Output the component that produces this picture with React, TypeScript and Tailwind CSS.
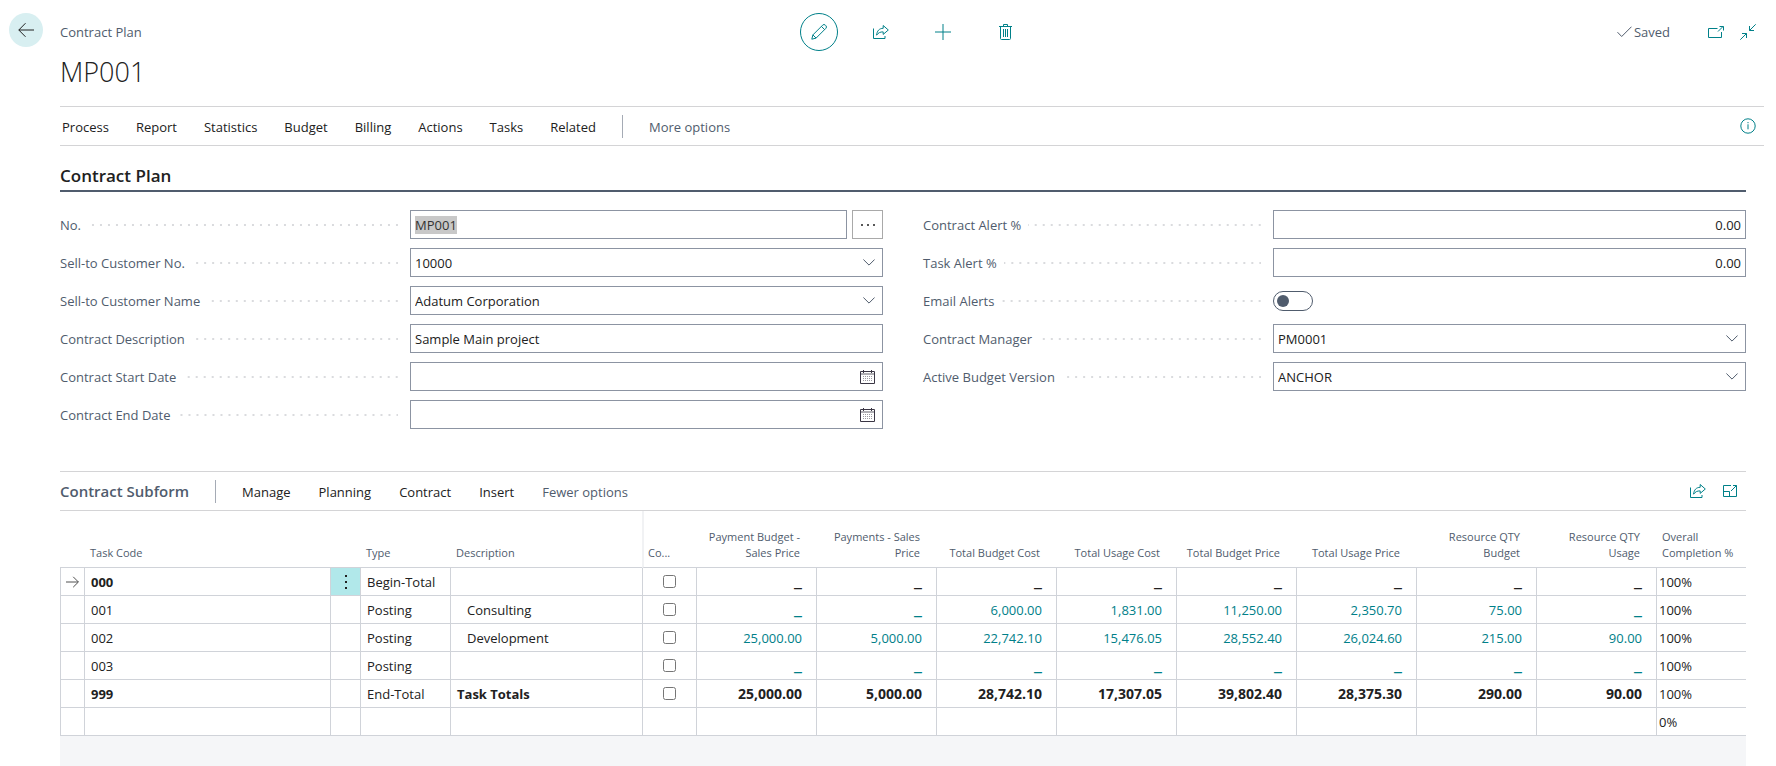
import React, { useEffect, useRef } from "react";

type IconProps = {
    className?: string;
};

type TaskRow = {
    code: string;
    type: string;
    description: string;
    amounts: string[];
    completion: string;
    total?: boolean;
    current?: boolean;
    linked?: boolean;
};

const pageActions = [
    "Process",
    "Report",
    "Statistics",
    "Budget",
    "Billing",
    "Actions",
    "Tasks",
    "Related",
];

const subformActions = ["Manage", "Planning", "Contract", "Insert"];

const amountColumns = [
    "Payment Budget - Sales Price",
    "Payments - Sales Price",
    "Total Budget Cost",
    "Total Usage Cost",
    "Total Budget Price",
    "Total Usage Price",
    "Resource QTY Budget",
    "Resource QTY Usage",
];

const rows: TaskRow[] = [
    {
        code: "000",
        type: "Begin-Total",
        description: "",
        amounts: ["_", "_", "_", "_", "_", "_", "_", "_"],
        completion: "100%",
        total: true,
        current: true,
    },
    {
        code: "001",
        type: "Posting",
        description: "Consulting",
        amounts: ["_", "_", "6,000.00", "1,831.00", "11,250.00", "2,350.70", "75.00", "_"],
        completion: "100%",
        linked: true,
    },
    {
        code: "002",
        type: "Posting",
        description: "Development",
        amounts: [
            "25,000.00",
            "5,000.00",
            "22,742.10",
            "15,476.05",
            "28,552.40",
            "26,024.60",
            "215.00",
            "90.00",
        ],
        completion: "100%",
        linked: true,
    },
    {
        code: "003",
        type: "Posting",
        description: "",
        amounts: ["_", "_", "_", "_", "_", "_", "_", "_"],
        completion: "100%",
        linked: true,
    },
    {
        code: "999",
        type: "End-Total",
        description: "Task Totals",
        amounts: [
            "25,000.00",
            "5,000.00",
            "28,742.10",
            "17,307.05",
            "39,802.40",
            "28,375.30",
            "290.00",
            "90.00",
        ],
        completion: "100%",
        total: true,
    },
];

/* Icons */

const BackIcon = ({ className }: IconProps) => (
    <svg className={className} width="16" height="16" viewBox="0 0 16 16" fill="none" stroke="currentColor">
        <path d="M16 8H.8M7.5 1.2L.8 8l6.7 6.8" />
    </svg>
);

const PencilIcon = ({ className }: IconProps) => (
    <svg className={className} width="16" height="16" viewBox="0 0 16 16" fill="none" stroke="currentColor">
        <path d="M.8 15.2l1.1-4.3L11.6 1.2a1.9 1.9 0 0 1 2.8 0l.4.4a1.9 1.9 0 0 1 0 2.8L5.1 14.1zM10.4 2.4l3.2 3.2M1.9 10.9l3.2 3.2" />
    </svg>
);

const ShareIcon = ({ className }: IconProps) => (
    <svg className={className} width="16" height="16" viewBox="0 0 16 16" fill="none" stroke="currentColor">
        <path d="M.5 4.5v10h11.5v-2.5" />
        <path d="M3.6 11.2c.4-4.4 2.6-6.8 6.6-6.9V1.5L15.3 6l-5.1 4.4V7.9c-3-.1-5 .9-6.6 3.3z" />
    </svg>
);

const PlusIcon = ({ className }: IconProps) => (
    <svg className={className} width="16" height="16" viewBox="0 0 16 16" fill="none" stroke="currentColor">
        <path d="M8 0v16M0 8h16" />
    </svg>
);

const TrashIcon = ({ className }: IconProps) => (
    <svg className={className} width="13" height="16" viewBox="0 0 13 16" fill="none" stroke="currentColor">
        <path d="M0 2.5h13M4.5 2.5v-2h4v2M1.5 2.5v12a1 1 0 0 0 1 1h8a1 1 0 0 0 1-1v-12M4.5 5v8M6.5 5v8M8.5 5v8" />
    </svg>
);

const CheckIcon = ({ className }: IconProps) => (
    <svg className={className} width="15" height="12" viewBox="0 0 15 12" fill="none" stroke="currentColor">
        <path d="M.5 6.2l4.2 4.3L14.5.7" />
    </svg>
);

const PopOutIcon = ({ className }: IconProps) => (
    <svg className={className} width="16" height="12" viewBox="0 0 16 12" fill="none" stroke="currentColor">
        <path d="M9.5 2.5h-9v9h13V6M10 5.5L15 .5M11.5.5h4v4" />
    </svg>
);

const CollapseIcon = ({ className }: IconProps) => (
    <svg className={className} width="16" height="16" viewBox="0 0 16 16" fill="none" stroke="currentColor">
        <path d="M15.7.3L9.5 6.5M9.5 2v4.5H14M.3 15.7l6.2-6.2M2 9.5h4.5V14" />
    </svg>
);

const InfoIcon = ({ className }: IconProps) => (
    <svg className={className} width="16" height="16" viewBox="0 0 16 16" fill="none" stroke="currentColor">
        <circle cx="8" cy="8" r="7.2" />
        <path d="M8 6.3v5M8 4v1.2" />
    </svg>
);

const ExpandIcon = ({ className }: IconProps) => (
    <svg className={className} width="14" height="12" viewBox="0 0 14 12" fill="none" stroke="currentColor">
        <path d="M8 .5H.5v11h13V.5H10M.5 6.5h6v5M8 6l5-5M13.5 5V.5" />
    </svg>
);

const ChevronIcon = ({ className }: IconProps) => (
    <svg className={className} width="12" height="7" viewBox="0 0 12 7" fill="none" stroke="currentColor">
        <path d="M.4.5L6 6.1 11.6.5" />
    </svg>
);

const CalendarIcon = ({ className }: IconProps) => (
    <svg className={className} width="15" height="14" viewBox="0 0 15 14" fill="none" stroke="currentColor">
        <path d="M.5 1.5h14v12H.5zM3.5 0v3M11.5 0v3" />
        <path d="M1 3.5h13M1 4.5h13" opacity=".4" />
        <path d="M3 6.5h9M3 8.5h9M3 10.5h9" strokeDasharray="1 1" opacity=".5" />
    </svg>
);

const RowArrowIcon = ({ className }: IconProps) => (
    <svg className={className} width="13" height="12" viewBox="0 0 13 12" fill="none" stroke="currentColor">
        <path d="M0 6h12.3M7.2.8L12.4 6l-5.2 5.2" />
    </svg>
);

/* Form fields */

const fieldClass =
    "block h-[29px] w-full min-w-0 appearance-none rounded-none border border-[#8c94a2] bg-white px-1 text-[13px] leading-[19px] text-[#212121] outline-none";

type FieldProps = {
    id: string;
    label: string;
    children: React.ReactNode;
};

const Field: React.FC<FieldProps> = ({ id, label, children }) => (
    <div className="flex h-[29px] items-center">
        <div className="flex w-[350px] shrink-0 items-center">
            <label htmlFor={id} className="text-[13px] text-[#505c6d]">
                {label}
            </label>
            {/* dotted leader */}
            <span className="mr-3 ml-[7px] h-0.5 flex-1 bg-[linear-gradient(90deg,transparent_6px,#dadbde_6px)] bg-[length:8px_2px] bg-right bg-repeat-x" />
        </div>
        <div className="relative flex min-w-0 flex-1 items-center gap-[5px]">{children}</div>
    </div>
);

const SelectField = ({ id, label, value }: { id: string; label: string; value: string }) => (
    <Field id={id} label={label}>
        <select id={id} className={`${fieldClass} pt-0.5`}>
            <option>{value}</option>
        </select>
        <ChevronIcon className="pointer-events-none absolute right-2 text-[#505c6d]" />
    </Field>
);

const DateField = ({ id, label }: { id: string; label: string }) => (
    <Field id={id} label={label}>
        <input id={id} type="text" className={fieldClass} />
        <button type="button" aria-label={label} className="absolute right-2 text-[#3a3644]">
            <CalendarIcon />
        </button>
    </Field>
);

const headerCell = "border-b border-[#d0d3d9] pb-1.5 align-bottom font-normal";
const bodyCell = "h-7 border-b border-l border-[#d0d3d9] pt-0";

const App: React.FC = () => {
    const numberRef = useRef<HTMLInputElement>(null);

    useEffect(() => {
        numberRef.current?.focus();
        numberRef.current?.select();
    }, []);

    return (
        <div className="flex min-h-screen bg-white font-['Open_Sans','Noto_Sans',sans-serif] text-[13px] leading-5 text-[#212121]">
            <div className="w-[60px] shrink-0 pt-[13px] pl-[9px]">
                <button
                    type="button"
                    aria-label="Back"
                    className="flex size-[34px] items-center justify-center rounded-full bg-[#d8eff1]"
                >
                    <BackIcon />
                </button>
            </div>

            <main className="flex min-w-0 flex-1 flex-col pr-3">
                {/* Title bar */}
                <header className="grid grid-cols-[1fr_auto_1fr] items-center pt-[13px]">
                    <span className="text-[#505c6d]">Contract Plan</span>
                    <div className="flex h-[38px] gap-6 text-[#008089]">
                        <button
                            type="button"
                            aria-label="Edit"
                            className="flex w-[38px] items-center justify-center rounded-full border border-[#008089]"
                        >
                            <PencilIcon />
                        </button>
                        <button type="button" aria-label="Share" className="flex w-[38px] items-center justify-center">
                            <ShareIcon />
                        </button>
                        <button type="button" aria-label="New" className="flex w-[38px] items-center justify-center">
                            <PlusIcon />
                        </button>
                        <button type="button" aria-label="Delete" className="flex w-[38px] items-center justify-center">
                            <TrashIcon />
                        </button>
                    </div>
                    <div className="flex items-center justify-end gap-4 pr-2 text-[#008089]">
                        <span className="mr-[22px] flex items-center gap-0.5 text-[#505c6d]">
                            <CheckIcon />
                            Saved
                        </span>
                        <button type="button" aria-label="Open in new window">
                            <PopOutIcon />
                        </button>
                        <button type="button" aria-label="Collapse">
                            <CollapseIcon />
                        </button>
                    </div>
                </header>
                <h1 className="mt-[3px] mb-4 text-[27px] leading-9 font-light">MP001</h1>

                {/* Action bar */}
                <nav className="flex h-10 items-center border-y border-[#d4d4d6] pl-0.5">
                    <div className="flex gap-[27px] pt-0.5">
                        {pageActions.map((action) => (
                            <button key={action} type="button">
                                {action}
                            </button>
                        ))}
                    </div>
                    <span className="mx-[26px] h-[23px] w-px bg-[#a5abb5]" />
                    <button type="button" className="pt-0.5 text-[#505c6d]">
                        More options
                    </button>
                    <button type="button" aria-label="Details" className="mr-2 ml-auto text-[#008089]">
                        <InfoIcon />
                    </button>
                </nav>

                <div className="flex flex-1 flex-col pr-[18px]">
                    {/* General fields */}
                    <section>
                        <h2 className="flex h-[46px] items-end border-b-2 border-[#505c6d] pb-0.5 text-[17px] leading-6 font-semibold">
                            Contract Plan
                        </h2>
                        <div className="mt-[18px] grid grid-cols-2 gap-x-10">
                            <div className="flex flex-col gap-[9px]">
                                <Field id="no" label="No.">
                                    <input
                                        id="no"
                                        ref={numberRef}
                                        type="text"
                                        defaultValue="MP001"
                                        className={`${fieldClass} selection:bg-[#c8c8c8] selection:text-[#333333]`}
                                    />
                                    <button
                                        type="button"
                                        aria-label="Assist edit"
                                        className="flex h-[29px] w-[31px] shrink-0 items-center justify-center border border-[#a9a9a9]"
                                    >
                                        <svg width="14" height="2" viewBox="0 0 14 2" fill="currentColor">
                                            <circle cx="1" cy="1" r="1" />
                                            <circle cx="7" cy="1" r="1" />
                                            <circle cx="13" cy="1" r="1" />
                                        </svg>
                                    </button>
                                </Field>
                                <SelectField id="customer-no" label="Sell-to Customer No." value="10000" />
                                <SelectField id="customer-name" label="Sell-to Customer Name" value="Adatum Corporation" />
                                <Field id="description" label="Contract Description">
                                    <input
                                        id="description"
                                        type="text"
                                        defaultValue="Sample Main project"
                                        className={fieldClass}
                                    />
                                </Field>
                                <DateField id="start-date" label="Contract Start Date" />
                                <DateField id="end-date" label="Contract End Date" />
                            </div>
                            <div className="flex flex-col gap-[9px]">
                                <Field id="contract-alert" label="Contract Alert %">
                                    <input
                                        id="contract-alert"
                                        type="text"
                                        defaultValue="0.00"
                                        className={`${fieldClass} text-right`}
                                    />
                                </Field>
                                <Field id="task-alert" label="Task Alert %">
                                    <input
                                        id="task-alert"
                                        type="text"
                                        defaultValue="0.00"
                                        className={`${fieldClass} text-right`}
                                    />
                                </Field>
                                <Field id="email-alerts" label="Email Alerts">
                                    <input
                                        id="email-alerts"
                                        type="checkbox"
                                        role="switch"
                                        className="h-5 w-10 appearance-none rounded-full border border-[#505c6d] p-[3px] before:block before:size-3 before:rounded-full before:bg-[#505c6d] checked:before:ml-5"
                                    />
                                </Field>
                                <SelectField id="manager" label="Contract Manager" value="PM0001" />
                                <SelectField id="budget-version" label="Active Budget Version" value="ANCHOR" />
                            </div>
                        </div>
                    </section>

                    {/* Contract lines */}
                    <section className="mt-[42px] flex flex-1 flex-col">
                        <div className="flex h-10 shrink-0 items-center border-y border-[#d4d4d6]">
                            <h2 className="text-[15px] font-semibold text-[#505c6d]">Contract Subform</h2>
                            <span className="mx-[26px] h-[23px] w-px bg-[#a5abb5]" />
                            <div className="flex gap-7 pt-0.5">
                                {subformActions.map((action) => (
                                    <button key={action} type="button">
                                        {action}
                                    </button>
                                ))}
                                <button type="button" className="text-[#505c6d]">
                                    Fewer options
                                </button>
                            </div>
                            <div className="mr-[9px] ml-auto flex items-center gap-[17px] text-[#008089]">
                                <button type="button" aria-label="Share lines">
                                    <ShareIcon />
                                </button>
                                <button type="button" aria-label="Expand lines">
                                    <ExpandIcon />
                                </button>
                            </div>
                        </div>

                        <table className="w-full table-fixed border-separate border-spacing-0 text-left">
                            <colgroup>
                                <col className="w-6" />
                                <col />
                                <col className="w-[30px]" />
                                <col className="w-[90px]" />
                                <col className="w-48" />
                                <col className="w-[54px]" />
                                {amountColumns.map((column) => (
                                    <col key={column} className="w-[120px]" />
                                ))}
                                <col className="w-[90px]" />
                            </colgroup>
                            <thead className="text-[11px] leading-4 text-[#505c6d]">
                                <tr className="h-[57px]">
                                    <th className={headerCell} />
                                    <th className={`${headerCell} pl-1.5`}>Task Code</th>
                                    <th className={headerCell} />
                                    <th className={`${headerCell} pl-1.5`}>Type</th>
                                    <th className={`${headerCell} pl-1.5`}>Description</th>
                                    <th className={`${headerCell} border-l-2 border-l-[#f1f2f4] pl-1`}>Co...</th>
                                    {amountColumns.map((column) => (
                                        <th key={column} className={`${headerCell} pr-4 pl-1 text-right`}>
                                            {column}
                                        </th>
                                    ))}
                                    <th className={`${headerCell} pl-1.5`}>Overall Completion %</th>
                                </tr>
                            </thead>
                            <tbody>
                                {rows.map((row) => (
                                    <tr key={row.code}>
                                        <td className={bodyCell}>
                                            {row.current && <RowArrowIcon className="mx-auto text-[#505050]" />}
                                        </td>
                                        <td className={`${bodyCell} pl-1.5 ${row.total ? "font-bold" : ""}`}>
                                            {row.code}
                                        </td>
                                        <td className={`${bodyCell} ${row.current ? "bg-[#b1e8ea]" : ""}`}>
                                            {row.current && (
                                                <button
                                                    type="button"
                                                    aria-label="Row menu"
                                                    className="flex h-full w-full items-center justify-center"
                                                >
                                                    <svg width="2" height="14" viewBox="0 0 2 14" fill="currentColor">
                                                        <path d="M0 0h2v2H0zM0 6h2v2H0zM0 12h2v2H0z" />
                                                    </svg>
                                                </button>
                                            )}
                                        </td>
                                        <td className={`${bodyCell} pl-1.5`}>{row.type}</td>
                                        <td className={`${bodyCell} ${row.total ? "pl-1.5 font-bold" : "pl-4"}`}>
                                            {row.description}
                                        </td>
                                        <td className={bodyCell}>
                                            <input
                                                type="checkbox"
                                                aria-label={row.code}
                                                className="mx-auto block size-[13px]"
                                            />
                                        </td>
                                        {row.amounts.map((amount, index) => (
                                            <td
                                                key={amountColumns[index]}
                                                className={`${bodyCell} pr-[14px] text-right ${
                                                    row.linked ? "text-[#008089]" : ""
                                                } ${amount === "_" ? "pb-1.5 text-lg leading-5" : ""} ${
                                                    row.total && amount !== "_" ? "text-sm leading-5 font-bold" : ""
                                                }`}
                                            >
                                                {row.linked ? <a href="#">{amount}</a> : amount}
                                            </td>
                                        ))}
                                        <td className={`${bodyCell} pl-0.5`}>{row.completion}</td>
                                    </tr>
                                ))}
                                {/* new line */}
                                <tr>
                                    {Array.from({ length: 14 }, (_, index) => (
                                        <td key={index} className={bodyCell} />
                                    ))}
                                    <td className={`${bodyCell} pl-0.5`}>0%</td>
                                </tr>
                            </tbody>
                        </table>
                        <div className="min-h-[30px] flex-1 bg-[#f5f6f8]" />
                    </section>
                </div>
            </main>
        </div>
    );
};

export default App;
